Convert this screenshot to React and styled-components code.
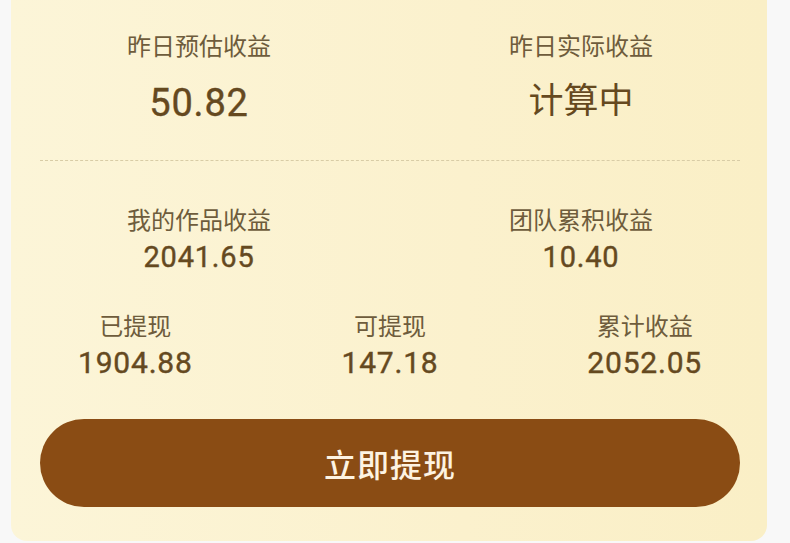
import React from 'react'
import styled, { createGlobalStyle } from 'styled-components'

const GlobalStyle = createGlobalStyle`
  html, body {
    margin: 0;
    padding: 0;
    background: #f8f8f8;
  }
  * {
    box-sizing: border-box;
  }
`

const Card = styled.div`
  width: 756px;
  height: 541px;
  margin-left: 11px;
  padding: 29px 0 34px;
  display: flex;
  flex-direction: column;
  background: linear-gradient(90deg, #fcf5d8 0%, #fbf1cd 60%, #faefc6 100%);
  border-radius: 0 0 16px 16px;
  font-family: 'Noto Sans CJK SC', 'Noto Sans', sans-serif;
`

// the stat columns run a little past the card edges in the original
const Grid = styled.div`
  display: grid;
  grid-template-columns: repeat(${(p) => p.cols}, 1fr);
  margin: ${(p) => p.gap || 0}px -5px 0 -3px;
`

const Stat = styled.div`
  display: flex;
  flex-direction: column;
  align-items: center;
  gap: ${(p) => p.spacing}px;
`

const Label = styled.div`
  font-size: 24px;
  line-height: 32px;
  color: #6e5c3c;
  white-space: nowrap;
`

const Value = styled.div`
  font-family: Roboto, 'Liberation Sans', 'Noto Sans CJK SC', sans-serif;
  font-weight: 400;
  font-size: ${(p) => p.size}px;
  line-height: ${(p) => p.lh}px;
  letter-spacing: 0.8px;
  color: #65491f;
  white-space: nowrap;
  -webkit-text-stroke: 0.4px #65491f;
`

const Pending = styled(Value)`
  font-family: 'Noto Sans CJK SC', sans-serif;
  letter-spacing: 0;
  -webkit-text-stroke: 0;
  margin-top: -5px;
`

const Divider = styled.div`
  margin: 33px 27px 0 29px;
  border-top: 1px dashed #d8cca6;
`

const WithdrawButton = styled.button`
  margin: auto 27px 0 29px;
  height: 88px;
  border: none;
  border-radius: 44px;
  background: #8a4c14;
  color: #fdf3e2;
  font-family: 'Noto Sans CJK SC', sans-serif;
  font-size: 32px;
  font-weight: 500;
  letter-spacing: 1px;
  cursor: pointer;
`

function Item({ label, value, size, lh, spacing, pending }) {
  const V = pending ? Pending : Value
  return (
    <Stat spacing={spacing}>
      <Label>{label}</Label>
      <V size={size} lh={lh}>
        {value}
      </V>
    </Stat>
  )
}

export default function App() {
  return (
    <>
      <GlobalStyle />
      <Card>
        <Grid cols={2}>
          <Item label="昨日预估收益" value="50.82" size={38} lh={48} spacing={18} />
          <Item label="昨日实际收益" value="计算中" size={35} lh={48} spacing={18} pending />
        </Grid>
        <Divider />
        <Grid cols={2} gap={42}>
          <Item label="我的作品收益" value="2041.65" size={29} lh={36} spacing={4} />
          <Item label="团队累积收益" value="10.40" size={29} lh={36} spacing={4} />
        </Grid>
        <Grid cols={3} gap={34}>
          <Item label="已提现" value="1904.88" size={30} lh={36} spacing={4} />
          <Item label="可提现" value="147.18" size={30} lh={36} spacing={4} />
          <Item label="累计收益" value="2052.05" size={30} lh={36} spacing={4} />
        </Grid>
        <WithdrawButton>立即提现</WithdrawButton>
      </Card>
    </>
  )
}
